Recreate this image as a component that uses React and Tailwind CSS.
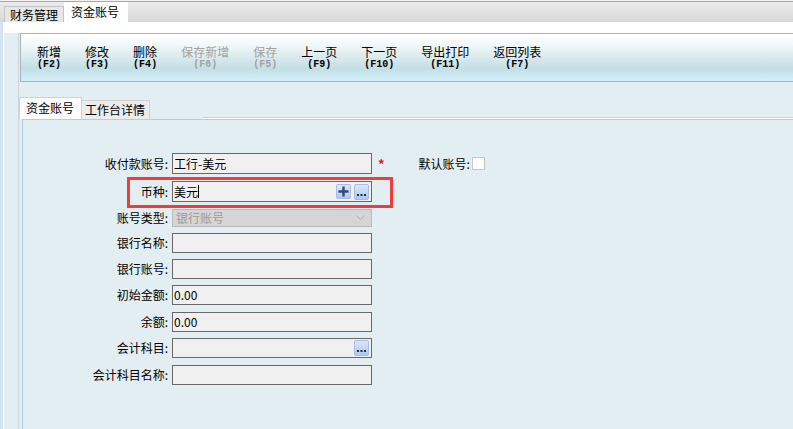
import React from "react";

const cjk = "font-['Noto_Sans_CJK_SC','Noto_Sans',sans-serif]";

const ACTIONS = [
  { label: "新增", key: "F2" },
  { label: "修改", key: "F3" },
  { label: "删除", key: "F4" },
  { label: "保存新增", key: "F6", disabled: true },
  { label: "保存", key: "F5", disabled: true },
  { label: "上一页", key: "F9" },
  { label: "下一页", key: "F10" },
  { label: "导出打印", key: "F11" },
  { label: "返回列表", key: "F7" },
];

function ToolButton({ label, hotkey, disabled }) {
  return (
    <button
      className={`flex flex-col items-center text-[12px] leading-[12px] ${
        disabled ? "text-[#a2a2a2]" : "text-black"
      }`}
    >
      <span>{label}</span>
      <span className="font-['Liberation_Mono',monospace] text-[10px] font-bold leading-[11px] mt-[1px]">
        ({hotkey})
      </span>
    </button>
  );
}

function PlusButton() {
  return (
    <svg width="15" height="15" viewBox="0 0 15 15">
      <defs>
        <linearGradient id="btnPlus" x1="0" y1="0" x2="0" y2="1">
          <stop offset="0" stopColor="#dbe8fb" />
          <stop offset="1" stopColor="#aec6ef" />
        </linearGradient>
      </defs>
      <rect x="0.5" y="0.5" width="14" height="14" rx="1.5" fill="url(#btnPlus)" stroke="#a5bde3" />
      <path d="M7.5 2.5v10M2.5 7.5h10" stroke="#2d4b78" strokeWidth="2.4" />
    </svg>
  );
}

function MoreButton() {
  return (
    <svg width="15" height="16" viewBox="0 0 15 16">
      <defs>
        <linearGradient id="btnMore" x1="0" y1="0" x2="0" y2="1">
          <stop offset="0" stopColor="#dbe8fb" />
          <stop offset="1" stopColor="#aec6ef" />
        </linearGradient>
      </defs>
      <rect x="0.5" y="0.5" width="14" height="15" rx="1.5" fill="url(#btnMore)" stroke="#a5bde3" />
      <rect x="3" y="10" width="2" height="2" fill="#1f2f4a" />
      <rect x="6.5" y="10" width="2" height="2" fill="#1f2f4a" />
      <rect x="10" y="10" width="2" height="2" fill="#1f2f4a" />
    </svg>
  );
}

function Label({ children }) {
  return <div className="w-[145px] mr-[4px] text-right text-[12px] leading-none">{children}</div>;
}

function Field({ label, value, className = "", h = "h-[20px]", children }) {
  return (
    <div className={`flex items-center ${className}`}>
      <Label>{label}</Label>
      <div
        className={`w-[200px] ${h} border border-[#686868] bg-[#f0f0f0] flex items-center pl-[1px] pr-[2px] text-[12px] leading-none`}
      >
        <span className="flex-1">{value}</span>
        {children}
      </div>
    </div>
  );
}

export default function App() {
  return (
    <div className={`w-[793px] h-[429px] overflow-hidden bg-[#e3eef3] flex flex-col text-black ${cjk}`}>
      {/* module tabs */}
      <div className="h-[22px] bg-[#f2f2f2] pt-[1px] shrink-0">
        <div className="h-full border-t border-[#a3abab] bg-[linear-gradient(#ebebeb,#d7d8da)] flex items-end pl-[4px]">
          <div className="h-[16px] border border-b-0 border-[#c4c4c4] bg-[#e7e7e7] px-[5px] text-[12px] leading-[15px]">
            财务管理
          </div>
          <div className="h-[20px] w-[64px] bg-white pl-[7px] text-[12px] leading-[19px]">资金账号</div>
        </div>
      </div>

      <div className="flex-1 flex">
        <div className="w-[4px] flex">
          <div className="w-[3px] bg-[#d3e4f4]" />
          <div className="w-[1px] bg-white" />
        </div>

        <div className="flex-1 flex flex-col">
          <div className="h-[11px] bg-white shrink-0" />

          <div className="flex-1 flex">
            <div className="w-[15px] border-r border-[#cdd5d9]" />

            <div className="flex-1 flex flex-col">
              {/* toolbar */}
              <div className="ml-[1px] h-[49px] border-y border-l border-[#a7b3b7] bg-[linear-gradient(#ffffff_0%,#f3f8f8_22%,#c3dee5_74%,#d2effa_100%)] flex items-center pl-[16px] gap-6">
                {ACTIONS.map((a) => (
                  <ToolButton key={a.key} label={a.label} hotkey={a.key} disabled={a.disabled} />
                ))}
              </div>

              {/* form tabs */}
              <div className="mt-[15px] h-[22px] flex items-end">
                <div className="h-[22px] w-[63px] border border-b-0 border-[#cfd2d3] bg-white pl-[6px] text-[12px] leading-[20px]">
                  资金账号
                </div>
                <div className="h-[19px] w-[68px] border border-b-0 border-l-0 border-[#cfd2d3] bg-[#ececec] pl-[3px] text-[12px] leading-[18px]">
                  工作台详情
                </div>
                <div className="flex-1 ml-[52px] h-[2px] border-t border-[#d2d2d2] bg-white" />
              </div>

              <div className="flex-1 ml-[3px] border-t border-l border-[#a8d3e3] pt-[33px]">
                <div className="flex items-center">
                  <Field label="收付款账号:" value="工行-美元" h="h-[21px]" />
                  <span className="ml-[6px] text-[13px] font-bold text-[#f01010] leading-none">*</span>
                  <span className="ml-[34px] text-[12px] leading-none">默认账号:</span>
                  <span className="ml-[2px] w-[13px] h-[13px] border border-[#c6c6c6] bg-white" />
                </div>

                <div className="relative mt-[7px]">
                  <Field label="币种:" h="h-[21px]" value={
                    <span className="flex items-center">
                      美元<span className="w-px h-[13px] bg-black" />
                    </span>
                  }>
                    <span className="flex items-center gap-[3px]">
                      <PlusButton />
                      <MoreButton />
                    </span>
                  </Field>
                  <div className="absolute left-[104px] top-[-4px] w-[266px] h-[31px] border-[3px] border-[#f33b3b]" />
                </div>

                <div className="flex items-center mt-[7px]">
                  <Label>账号类型:</Label>
                  <div className="w-[200px] h-[18px] border border-[#bababa] bg-[#d5d5d5] flex items-center pl-[3px] pr-[6px] text-[12px] leading-none text-[#9b9b9b]">
                    <span className="flex-1">银行账号</span>
                    <svg width="9" height="6" viewBox="0 0 9 6">
                      <path d="M0.5 0.5l4 4 4-4" fill="none" stroke="#b3b3b3" />
                    </svg>
                  </div>
                </div>

                <Field label="银行名称:" className="mt-[6px]" />
                <Field label="银行账号:" className="mt-[6px]" />
                <Field label="初始金额:" value="0.00" className="mt-[6px]" />
                <Field label="余额:" value="0.00" className="mt-[7px]" />
                <Field label="会计科目:" className="mt-[6px]">
                  <MoreButton />
                </Field>
                <Field label="会计科目名称:" className="mt-[7px]" />
              </div>
            </div>
          </div>
        </div>
      </div>
    </div>
  );
}
